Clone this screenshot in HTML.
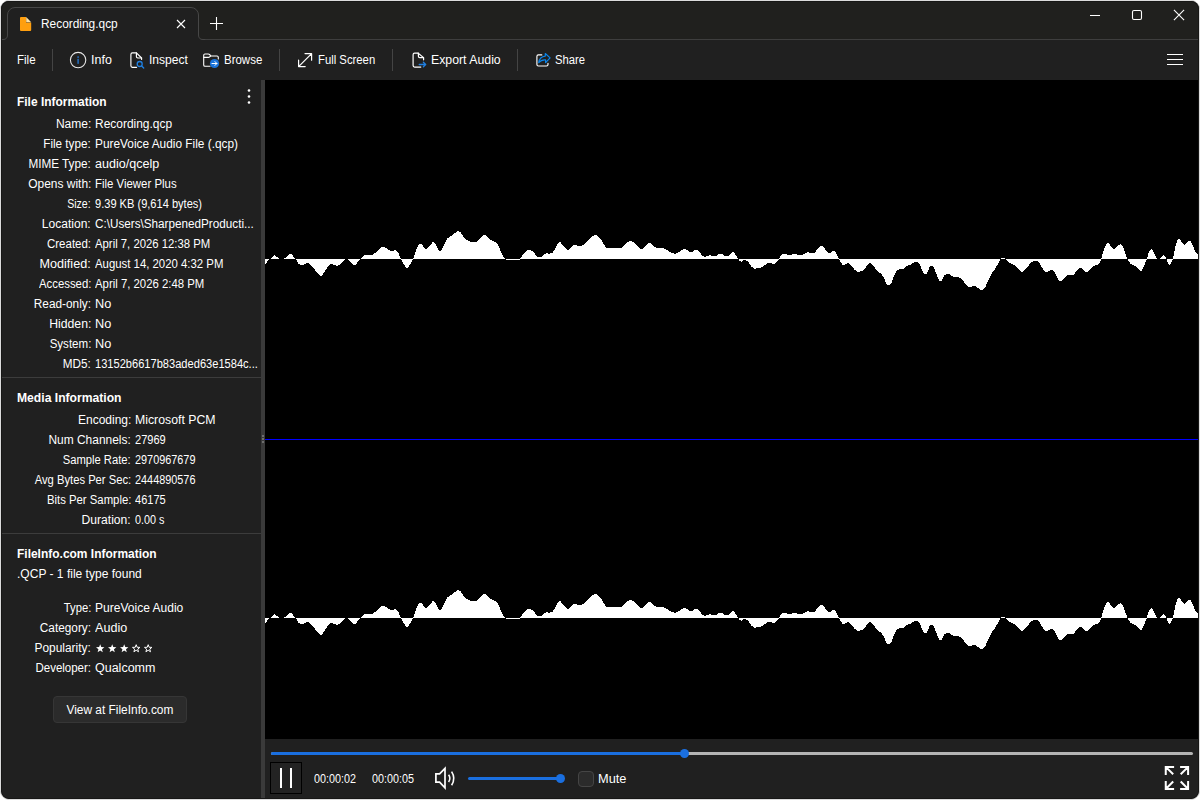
<!DOCTYPE html>
<html><head><meta charset="utf-8"><title>File Viewer Plus</title>
<style>
*{box-sizing:border-box;margin:0;padding:0}
html,body{width:1200px;height:800px;overflow:hidden;background:#fff}
body{font-family:"Liberation Sans",sans-serif;font-size:12px;color:#fff;position:relative}
#win{position:absolute;left:0;top:0;width:1200px;height:800px;background:#202020;border:1px solid #dcdcdc;border-radius:9px;overflow:hidden}
#edge{position:absolute;left:1px;top:1px;width:1198px;height:798px;border:1px solid #171716;border-radius:8px;pointer-events:none}
#in{position:absolute;left:-1px;top:-1px;width:1200px;height:800px}
.abs{position:absolute}
.t{position:absolute;white-space:nowrap;line-height:16px;height:16px}
.sep{position:absolute;width:1px;background:#444;top:49px;height:22px}
.hr{position:absolute;left:1px;width:260px;height:1px;background:#3c3c3c}
</style></head><body>
<div id="win"><div id="in">

<!-- title / tab strip -->
<div class="abs" style="left:0;top:0;width:1200px;height:39px;background:#20201e"></div>
<div class="abs" style="left:1px;top:39px;width:1198px;height:1px;background:#3e3e3e"></div>
<svg class="abs" style="left:0;top:0" width="210" height="41" viewBox="0 0 210 41">
  <path d="M1 39.5 H3 Q7.5 39.5 7.5 35 V15 A7.5 7.5 0 0 1 15 7.5 H191 A7.5 7.5 0 0 1 198.5 15 V35 Q198.5 39.5 203 39.5 H205 V41 H1 Z" fill="#202020" stroke="#474747" stroke-width="1"/>
  <rect x="0" y="40" width="210" height="1" fill="#202020"/>
  <path d="M21 17 H26 V22.4 H31.2 V30 Q31.2 31 30.2 31 H21 Q20 31 20 30 V18 Q20 17 21 17 Z" fill="#ff9f0f"/>
  <path d="M26.2 17.1 L31.2 22.2 H26.2 Z" fill="#ffe2a6"/>
  <path d="M177 20 L185 28 M185 20 L177 28" stroke="#fff" stroke-width="1.1" fill="none"/>
</svg>
<div class="t" style="top:16px;left:40.90px;transform-origin:0 50%;transform:scaleX(0.9913);">Recording.qcp</div>
<svg class="abs" style="left:208px;top:15px" width="16" height="16" viewBox="0 0 16 16"><path d="M8.5 2 V15 M2 8.5 H15" stroke="#fff" stroke-width="1.1" fill="none"/></svg>

<!-- caption buttons -->
<svg class="abs" style="left:1080px;top:4px" width="120" height="24" viewBox="0 0 120 24">
  <path d="M10 11.5 H20" stroke="#fff" stroke-width="1.1"/>
  <rect x="52.5" y="6.5" width="9" height="9" rx="1.5" fill="none" stroke="#fff" stroke-width="1.1"/>
  <path d="M93.9 5.9 L104.1 16.1 M104.1 5.9 L93.9 16.1" stroke="#fff" stroke-width="1.1"/>
</svg>

<!-- toolbar -->
<div class="t" style="top:52px;left:17.00px;transform-origin:0 50%;transform:scaleX(0.9616);">File</div>
<div class="sep" style="left:52px"></div>
<div class="t" style="top:52px;left:90.80px;transform-origin:0 50%;transform:scaleX(1.0400);">Info</div>
<div class="t" style="top:52px;left:148.65px;transform-origin:0 50%;transform:scaleX(1.0072);">Inspect</div>
<div class="t" style="top:52px;left:223.80px;transform-origin:0 50%;transform:scaleX(0.9571);">Browse</div>
<div class="sep" style="left:279px"></div>
<div class="t" style="top:52px;left:318.10px;transform-origin:0 50%;transform:scaleX(0.9425);">Full Screen</div>
<div class="sep" style="left:392px"></div>
<div class="t" style="top:52px;left:430.90px;transform-origin:0 50%;transform:scaleX(1.0245);">Export Audio</div>
<div class="sep" style="left:517px"></div>
<div class="t" style="top:52px;left:555.40px;transform-origin:0 50%;transform:scaleX(0.9370);">Share</div>
<svg class="abs" style="left:1166px;top:53px" width="18" height="14" viewBox="0 0 18 14"><path d="M1 1.5 H17 M1 6.5 H17 M1 11.5 H17" stroke="#fff" stroke-width="1"/></svg>
<svg class="abs" style="left:0;top:40px" width="600" height="40" viewBox="0 40 600 40" fill="none" stroke-linecap="round" stroke-linejoin="round">
  <!-- info -->
  <circle cx="78.1" cy="60.1" r="7.7" stroke="#e6e6e6" stroke-width="1.1"/>
  <rect x="77.35" y="56.3" width="1.5" height="1.6" fill="#2470c4"/><rect x="77.35" y="58.8" width="1.5" height="5" fill="#2470c4"/>
  <!-- inspect -->
  <g stroke="#fff" stroke-width="1.15">
    <path d="M136.4 52.9 H132.4 Q130.9 52.9 130.9 54.4 V65.8 Q130.9 67.3 132.4 67.3 H136.6"/>
    <path d="M136.4 52.9 L141.6 58 V59.4"/>
    <path d="M136.4 53.2 V56.6 Q136.4 58 137.8 58 H141.4"/>
  </g>
  <circle cx="139.7" cy="64" r="2.5" stroke="#1f7fe0" stroke-width="1.3"/><path d="M141.6 65.9 L143.7 68" stroke="#1f7fe0" stroke-width="1.4"/>
  <!-- browse -->
  <g stroke="#fff" stroke-width="1.1">
    <path d="M210 66.3 H205 Q203.7 66.3 203.7 65 V55.2 Q203.7 54 204.9 54 H208.3 Q209 54 209.5 54.5 L210.6 55.6 Q211 56 211.7 56 H217 Q218.3 56 218.3 57.3 V59"/>
    <path d="M203.9 57.4 H208.4 Q209.2 57.4 209.7 56.9 L210.6 56"/>
  </g>
  <circle cx="214.5" cy="63.5" r="4.6" fill="#1a73d9"/>
  <path d="M212 63.5 H216.8 M215 61.6 L216.9 63.5 L215 65.4" stroke="#fff" stroke-width="1"/>
  <!-- fullscreen -->
  <path d="M298.6 66.6 L311.6 53.6 M305 53.6 H311.6 V60.2 M298.6 60 V66.6 H305.2" stroke="#fff" stroke-width="1.2"/>
  <!-- export -->
  <g stroke="#fff" stroke-width="1.2">
    <path d="M418.2 53.2 H414.6 Q413.1 53.2 413.1 54.7 V65.6 Q413.1 67.1 414.6 67.1 H420.8"/>
    <path d="M418.2 53.2 L423.6 57.6 V59.8"/>
    <path d="M418.4 53.4 V56.2 Q418.4 57.6 419.8 57.6 H423.4"/>
  </g>
  <path d="M419.2 64.5 H425.6 M423.4 62.3 L425.7 64.5 L423.4 66.7" stroke="#1f7fe0" stroke-width="1.3"/>
  <!-- share -->
  <path d="M541.8 54.9 H538.4 Q536.9 54.9 536.9 56.4 V64.5 Q536.9 66 538.4 66 H546.5 Q548 66 548 64.5 V63.2" stroke="#fff" stroke-width="1.15"/>
  <path d="M545.3 53.5 L550.1 57.9 L545.6 62.6 V59.9 Q541.2 59.6 538.7 62.6 Q539.6 56.6 545.3 56.1 Z" stroke="#0a84e8" stroke-width="1.2"/>
</svg>

<!-- sidebar -->
<div class="t" style="top:94px;left:16.90px;transform-origin:0 50%;transform:scaleX(0.9948);font-weight:bold;">File Information</div>
<svg class="abs" style="left:246px;top:87.7px" width="6" height="17" viewBox="0 0 6 17"><circle cx="3" cy="2.5" r="1.3" fill="#fff"/><circle cx="3" cy="8.5" r="1.3" fill="#fff"/><circle cx="3" cy="14.5" r="1.3" fill="#fff"/></svg>
<div class="t" style="top:116px;right:1108.90px;transform-origin:100% 50%;transform:scaleX(1.0030);">Name:</div>
<div class="t" style="top:116px;left:95.00px;transform-origin:0 50%;transform:scaleX(0.9964);">Recording.qcp</div>
<div class="t" style="top:136px;right:1108.90px;transform-origin:100% 50%;transform:scaleX(0.9739);">File type:</div>
<div class="t" style="top:136px;left:95.00px;transform-origin:0 50%;transform:scaleX(0.9880);">PureVoice Audio File (.qcp)</div>
<div class="t" style="top:156px;right:1108.90px;transform-origin:100% 50%;transform:scaleX(0.9783);">MIME Type:</div>
<div class="t" style="top:156px;left:95.00px;transform-origin:0 50%;transform:scaleX(1.0460);">audio/qcelp</div>
<div class="t" style="top:176px;right:1108.90px;transform-origin:100% 50%;transform:scaleX(0.9962);">Opens with:</div>
<div class="t" style="top:176px;left:95.00px;transform-origin:0 50%;transform:scaleX(0.9509);">File Viewer Plus</div>
<div class="t" style="top:196px;right:1108.90px;transform-origin:100% 50%;transform:scaleX(0.8811);">Size:</div>
<div class="t" style="top:196px;left:95.00px;transform-origin:0 50%;transform:scaleX(0.9223);">9.39 KB (9,614 bytes)</div>
<div class="t" style="top:216px;right:1108.90px;transform-origin:100% 50%;transform:scaleX(1.0044);">Location:</div>
<div class="t" style="top:216px;left:95.00px;transform-origin:0 50%;transform:scaleX(0.9754);">C:\Users\SharpenedProducti...</div>
<div class="t" style="top:236px;right:1108.90px;transform-origin:100% 50%;transform:scaleX(0.9562);">Created:</div>
<div class="t" style="top:236px;left:95.00px;transform-origin:0 50%;transform:scaleX(0.9440);">April 7, 2026 12:38 PM</div>
<div class="t" style="top:256px;right:1108.90px;transform-origin:100% 50%;transform:scaleX(1.0516);">Modified:</div>
<div class="t" style="top:256px;left:95.00px;transform-origin:0 50%;transform:scaleX(0.9478);">August 14, 2020 4:32 PM</div>
<div class="t" style="top:276px;right:1108.90px;transform-origin:100% 50%;transform:scaleX(0.9450);">Accessed:</div>
<div class="t" style="top:276px;left:95.00px;transform-origin:0 50%;transform:scaleX(0.9466);">April 7, 2026 2:48 PM</div>
<div class="t" style="top:296px;right:1108.90px;transform-origin:100% 50%;transform:scaleX(0.9857);">Read-only:</div>
<div class="t" style="top:296px;left:95.00px;transform-origin:0 50%;transform:scaleX(1.0623);">No</div>
<div class="t" style="top:316px;right:1108.90px;transform-origin:100% 50%;transform:scaleX(1.0203);">Hidden:</div>
<div class="t" style="top:316px;left:95.00px;transform-origin:0 50%;transform:scaleX(1.0623);">No</div>
<div class="t" style="top:336px;right:1108.90px;transform-origin:100% 50%;transform:scaleX(0.9624);">System:</div>
<div class="t" style="top:336px;left:95.00px;transform-origin:0 50%;transform:scaleX(1.0623);">No</div>
<div class="t" style="top:356px;right:1108.90px;transform-origin:100% 50%;transform:scaleX(0.9766);">MD5:</div>
<div class="t" style="top:356px;left:95.00px;transform-origin:0 50%;transform:scaleX(0.9244);">13152b6617b83aded63e1584c...</div>
<div class="hr" style="top:377px"></div>
<div class="t" style="top:390px;left:16.90px;transform-origin:0 50%;transform:scaleX(1.0115);font-weight:bold;">Media Information</div>
<div class="t" style="top:412px;right:1068.90px;transform-origin:100% 50%;transform:scaleX(1.0008);">Encoding:</div>
<div class="t" style="top:412px;left:134.90px;transform-origin:0 50%;transform:scaleX(1.0245);">Microsoft PCM</div>
<div class="t" style="top:432px;right:1068.90px;transform-origin:100% 50%;transform:scaleX(0.9939);">Num Channels:</div>
<div class="t" style="top:432px;left:134.90px;transform-origin:0 50%;transform:scaleX(0.9203);">27969</div>
<div class="t" style="top:452px;right:1068.90px;transform-origin:100% 50%;transform:scaleX(0.9355);">Sample Rate:</div>
<div class="t" style="top:452px;left:134.90px;transform-origin:0 50%;transform:scaleX(0.9053);">2970967679</div>
<div class="t" style="top:472px;right:1068.90px;transform-origin:100% 50%;transform:scaleX(0.9349);">Avg Bytes Per Sec:</div>
<div class="t" style="top:472px;left:134.90px;transform-origin:0 50%;transform:scaleX(0.9053);">2444890576</div>
<div class="t" style="top:492px;right:1068.90px;transform-origin:100% 50%;transform:scaleX(0.9452);">Bits Per Sample:</div>
<div class="t" style="top:492px;left:134.90px;transform-origin:0 50%;transform:scaleX(0.9203);">46175</div>
<div class="t" style="top:512px;right:1068.90px;transform-origin:100% 50%;transform:scaleX(1.0085);">Duration:</div>
<div class="t" style="top:512px;left:134.90px;transform-origin:0 50%;transform:scaleX(0.9029);">0.00 s</div>
<div class="hr" style="top:533px"></div>
<div class="t" style="top:546px;left:16.90px;transform-origin:0 50%;transform:scaleX(0.9975);font-weight:bold;">FileInfo.com Information</div>
<div class="t" style="top:565.5px;left:16.90px;transform-origin:0 50%;transform:scaleX(1.0020);">.QCP - 1 file type found</div>
<div class="t" style="top:600px;right:1108.90px;transform-origin:100% 50%;transform:scaleX(0.9372);">Type:</div>
<div class="t" style="top:600px;left:95.00px;transform-origin:0 50%;transform:scaleX(1.0027);">PureVoice Audio</div>
<div class="t" style="top:620px;right:1108.90px;transform-origin:100% 50%;transform:scaleX(0.9843);">Category:</div>
<div class="t" style="top:620px;left:95.00px;transform-origin:0 50%;transform:scaleX(1.0493);">Audio</div>
<div class="t" style="top:640px;right:1108.90px;transform-origin:100% 50%;transform:scaleX(0.9914);">Popularity:</div>
<div class="t" style="top:660px;right:1108.90px;transform-origin:100% 50%;transform:scaleX(0.9581);">Developer:</div>
<div class="t" style="top:660px;left:95.00px;transform-origin:0 50%;transform:scaleX(1.0411);">Qualcomm</div>
<svg class="abs" style="left:90px;top:640px" width="70" height="16" viewBox="0 0 70 16"><polygon points="10.20,4.20 11.29,7.10 14.38,7.24 11.96,9.17 12.79,12.16 10.20,10.45 7.61,12.16 8.44,9.17 6.02,7.24 9.11,7.10" fill="#fff"/><polygon points="22.20,4.20 23.29,7.10 26.38,7.24 23.96,9.17 24.79,12.16 22.20,10.45 19.61,12.16 20.44,9.17 18.02,7.24 21.11,7.10" fill="#fff"/><polygon points="34.20,4.20 35.29,7.10 38.38,7.24 35.96,9.17 36.79,12.16 34.20,10.45 31.61,12.16 32.44,9.17 30.02,7.24 33.11,7.10" fill="#fff"/><polygon points="46.20,4.70 47.16,7.27 49.91,7.39 47.76,9.11 48.49,11.76 46.20,10.24 43.91,11.76 44.64,9.11 42.49,7.39 45.24,7.27" fill="none" stroke="#fff" stroke-width="1"/><polygon points="58.20,4.70 59.16,7.27 61.91,7.39 59.76,9.11 60.49,11.76 58.20,10.24 55.91,11.76 56.64,9.11 54.49,7.39 57.24,7.27" fill="none" stroke="#fff" stroke-width="1"/></svg>
<div class="abs" style="left:53px;top:696px;width:134px;height:27px;background:#2b2b2b;border:1px solid #363636;border-radius:4px"></div>
<div class="t" style="top:701.5px;left:65.60px;transform-origin:50% 50%;transform:scaleX(0.9917);">View at FileInfo.com</div>

<!-- splitter -->
<div class="abs" style="left:261px;top:80px;width:4px;height:720px;background:#3a3a3a"></div>
<div class="abs" style="left:262px;top:435px;width:2px;height:2px;background:#6e6e6e"></div>
<div class="abs" style="left:262px;top:438px;width:2px;height:2px;background:#6e6e6e"></div>
<div class="abs" style="left:262px;top:441px;width:2px;height:2px;background:#6e6e6e"></div>

<!-- waveform -->
<div class="abs" style="left:265px;top:80px;width:935px;height:659px;background:#000"></div>
<svg class="abs" style="left:0;top:0" width="1200" height="800" viewBox="0 0 1200 800" shape-rendering="crispEdges">
  <path d="M265 259L265 264.5L269.2 259L270 259L274 255L280 259L283.75 259L290 254L292 254.4L295 259L295.8 259L298.3 264L301.7 265L303.75 264.75L306.7 263L308.3 263L310.8 264.75L314.2 269L316.7 272.7L320 276L322 275.5L325 271L329.2 265L331.7 264L333.3 264.5L336.7 265.8L339.6 264.75L345 259L348 259L353.3 265L355.8 264.75L360 259L360.8 259L365 255L372.5 255L375.4 252.8L381.25 247L384.6 247L388.3 249.75L390.4 250.75L393.3 250.75L395 250L398.3 253L400.8 259L403.75 264L406 268L407.4 268L410.4 264.3L413.2 259L415.8 251L418.3 245.2L420 244L422 244.5L425.2 249L426.5 249L429.6 246L432.9 241.8L435.4 244L438.75 250.2L439.6 250.8L441 250.8L443 246.8L447 238.5L452.5 235L457.5 231L460 231.8L465 238.5L468.3 240.8L471.25 241.8L476.7 241.8L483.3 235L485.8 235L490.4 239.75L493.75 241.2L496.7 243L498.75 246L501.25 252.7L503.3 257L505.4 259L506 260L519.5 260L520 258.5L523.3 254.3L527.5 250.2L530.8 250.2L533.3 251.8L537 256.8L541.7 256.8L544.6 254.2L547.5 253.1L548.3 254L552 253.1L554.6 250.2L557.5 244L560 241.8L562.5 244.75L565 248L567.5 250L569.6 249L573.3 245L576.7 245L577.5 246L581.7 246L584.6 243.7L590 238.3L594.6 234.8L596.7 234.8L600.8 239.2L606.25 248L620.8 248L623 246.8L627.5 242L630 241L633.75 242L640.4 249L642.5 249L648.3 243L650.8 243L654.6 246.8L656.25 248L663.75 248L665 249L670 251.8L674.6 254L677.5 253L681.7 250L685 249L687.5 250.2L689.6 251.8L692.5 251.8L694.6 250L697.5 250L700.4 253L702 255.6L705 257L707.5 256L710 255L711.7 256L716.7 256L718.75 254.2L722.5 254.2L724.6 256L728 256L730 254.75L732.5 252L734.6 253L737.5 258L738.3 259L739.2 260.6L741.7 261.8L744.2 260L745.4 260L748.3 261.8L751.7 266.8L754.6 269L756.7 268L760 267.7L762.5 266.8L765 265L767.5 263L771.25 263L773 264L775 263.5L777.5 260.6L779.2 259L780.8 255.6L782.5 254.1L786.25 254.1L788 255L791.7 255L793 254.1L796.7 254.1L798 255L802.5 255L805.4 253.1L808.3 252.25L809.6 253.1L814.6 252.8L816.7 250L820.4 246L823 246L825 249.2L828.3 252.8L830.4 252.8L832.5 251L835 251L837 255.2L838.75 259L840.4 261.8L842.5 264.75L844.6 264.75L847.5 263L848.75 263L852 266.4L854.6 269.75L858 271.8L860 271.7L862.5 270.6L865 268.5L868 264L870.4 263L874.2 266.8L877.5 271.4L880.8 273.5L883.75 277.7L887 284.75L889.6 284.75L891.7 282.7L894.2 275.2L896.7 270.6L899.2 269.2L903 269L906.7 266L910.8 264.75L914.2 262L917.5 262L920 264.75L922 270.2L924.2 274L926.7 274L930 266.25L933 266.25L935.4 271.4L939.2 281L941.7 281L944.6 275.2L947 274L949.6 274.2L953 276.8L958.3 277L961.7 279L965 283.5L968.3 286.8L971.25 286.8L973 286L975.4 286L980.4 290L982.5 290L985 287.7L988.3 280.2L992.5 271.8L995 269L998 264L1000.4 259L1001 258L1005 258L1005.8 259L1009.2 262.7L1011.7 264L1015 265L1018.3 269L1021.7 272L1023.3 271.4L1026.7 268L1030.8 262.7L1033.75 261L1038 261L1040 264L1043 269L1045.4 271.8L1048 271.8L1050.4 270L1052.5 270L1054.6 272.25L1056.7 276.8L1059.2 281L1061.7 281L1065 277.5L1067.5 275L1073.75 275L1075.8 271.8L1079.2 268L1081.7 268L1085.4 271.8L1087.5 271.8L1093.3 266L1097.5 264.75L1099.6 262.7L1101.25 259L1103 252.7L1105 246.8L1107 243L1108.75 243L1111.7 247.25L1114.2 249.2L1118.3 245.2L1120.8 244L1123 246.8L1125 252.7L1127.5 259L1130.4 264L1135.8 266.4L1140.8 271L1142 270.6L1144.7 264.5L1146.8 259L1148.5 253L1150.8 249L1152 249L1154.3 253.8L1157 259L1160 259L1161.8 256.2L1163.6 255L1165.6 257L1166.6 259L1167.6 262.3L1169.5 265L1171.4 262.3L1173 259L1174.2 252.4L1175.9 244.6L1178 239.2L1180 239.2L1182 242.5L1184.6 245L1188.3 241.3L1190.7 241.3L1192.8 245.8L1195.3 251.6L1197.3 254L1198.7 252.8L1199 252.8L1199 259 Z" fill="#fff"/>
  <path d="M265 618L265 623.5L269.2 618L270 618L274 614L280 618L283.75 618L290 613L292 613.4L295 618L295.8 618L298.3 623L301.7 624L303.75 623.75L306.7 622L308.3 622L310.8 623.75L314.2 628L316.7 631.7L320 635L322 634.5L325 630L329.2 624L331.7 623L333.3 623.5L336.7 624.8L339.6 623.75L345 618L348 618L353.3 624L355.8 623.75L360 618L360.8 618L365 614L372.5 614L375.4 611.8L381.25 606L384.6 606L388.3 608.75L390.4 609.75L393.3 609.75L395 609L398.3 612L400.8 618L403.75 623L406 627L407.4 627L410.4 623.3L413.2 618L415.8 610L418.3 604.2L420 603L422 603.5L425.2 608L426.5 608L429.6 605L432.9 600.8L435.4 603L438.75 609.2L439.6 609.8L441 609.8L443 605.8L447 597.5L452.5 594L457.5 590L460 590.8L465 597.5L468.3 599.8L471.25 600.8L476.7 600.8L483.3 594L485.8 594L490.4 598.75L493.75 600.2L496.7 602L498.75 605L501.25 611.7L503.3 616L505.4 618L506 619L519.5 619L520 617.5L523.3 613.3L527.5 609.2L530.8 609.2L533.3 610.8L537 615.8L541.7 615.8L544.6 613.2L547.5 612.1L548.3 613L552 612.1L554.6 609.2L557.5 603L560 600.8L562.5 603.75L565 607L567.5 609L569.6 608L573.3 604L576.7 604L577.5 605L581.7 605L584.6 602.7L590 597.3L594.6 593.8L596.7 593.8L600.8 598.2L606.25 607L620.8 607L623 605.8L627.5 601L630 600L633.75 601L640.4 608L642.5 608L648.3 602L650.8 602L654.6 605.8L656.25 607L663.75 607L665 608L670 610.8L674.6 613L677.5 612L681.7 609L685 608L687.5 609.2L689.6 610.8L692.5 610.8L694.6 609L697.5 609L700.4 612L702 614.6L705 616L707.5 615L710 614L711.7 615L716.7 615L718.75 613.2L722.5 613.2L724.6 615L728 615L730 613.75L732.5 611L734.6 612L737.5 617L738.3 618L739.2 619.6L741.7 620.8L744.2 619L745.4 619L748.3 620.8L751.7 625.8L754.6 628L756.7 627L760 626.7L762.5 625.8L765 624L767.5 622L771.25 622L773 623L775 622.5L777.5 619.6L779.2 618L780.8 614.6L782.5 613.1L786.25 613.1L788 614L791.7 614L793 613.1L796.7 613.1L798 614L802.5 614L805.4 612.1L808.3 611.25L809.6 612.1L814.6 611.8L816.7 609L820.4 605L823 605L825 608.2L828.3 611.8L830.4 611.8L832.5 610L835 610L837 614.2L838.75 618L840.4 620.8L842.5 623.75L844.6 623.75L847.5 622L848.75 622L852 625.4L854.6 628.75L858 630.8L860 630.7L862.5 629.6L865 627.5L868 623L870.4 622L874.2 625.8L877.5 630.4L880.8 632.5L883.75 636.7L887 643.75L889.6 643.75L891.7 641.7L894.2 634.2L896.7 629.6L899.2 628.2L903 628L906.7 625L910.8 623.75L914.2 621L917.5 621L920 623.75L922 629.2L924.2 633L926.7 633L930 625.25L933 625.25L935.4 630.4L939.2 640L941.7 640L944.6 634.2L947 633L949.6 633.2L953 635.8L958.3 636L961.7 638L965 642.5L968.3 645.8L971.25 645.8L973 645L975.4 645L980.4 649L982.5 649L985 646.7L988.3 639.2L992.5 630.8L995 628L998 623L1000.4 618L1001 617L1005 617L1005.8 618L1009.2 621.7L1011.7 623L1015 624L1018.3 628L1021.7 631L1023.3 630.4L1026.7 627L1030.8 621.7L1033.75 620L1038 620L1040 623L1043 628L1045.4 630.8L1048 630.8L1050.4 629L1052.5 629L1054.6 631.25L1056.7 635.8L1059.2 640L1061.7 640L1065 636.5L1067.5 634L1073.75 634L1075.8 630.8L1079.2 627L1081.7 627L1085.4 630.8L1087.5 630.8L1093.3 625L1097.5 623.75L1099.6 621.7L1101.25 618L1103 611.7L1105 605.8L1107 602L1108.75 602L1111.7 606.25L1114.2 608.2L1118.3 604.2L1120.8 603L1123 605.8L1125 611.7L1127.5 618L1130.4 623L1135.8 625.4L1140.8 630L1142 629.6L1144.7 623.5L1146.8 618L1148.5 612L1150.8 608L1152 608L1154.3 612.8L1157 618L1160 618L1161.8 615.2L1163.6 614L1165.6 616L1166.6 618L1167.6 621.3L1169.5 624L1171.4 621.3L1173 618L1174.2 611.4L1175.9 603.6L1178 598.2L1180 598.2L1182 601.5L1184.6 604L1188.3 600.3L1190.7 600.3L1192.8 604.8L1195.3 610.6L1197.3 613L1198.7 611.8L1199 611.8L1199 618 Z" fill="#fff"/>
  <rect x="265" y="439" width="935" height="1" fill="#0000ff"/>
</svg>

<!-- player -->
<div class="abs" style="left:271px;top:752px;width:922px;height:3px;background:#b4b4b4;border-radius:2px"></div>
<div class="abs" style="left:271px;top:752px;width:414px;height:3px;background:#1a6fe0;border-radius:2px"></div>
<div class="abs" style="left:680px;top:749px;width:9px;height:9px;background:#1a6fe0;border-radius:50%"></div>
<div class="abs" style="left:270px;top:762px;width:32px;height:32px;border:1px solid #000;background:#232323"></div>
<div class="abs" style="left:280px;top:768px;width:2px;height:20px;background:#fff"></div>
<div class="abs" style="left:290px;top:768px;width:2px;height:20px;background:#fff"></div>
<div class="t" style="top:771px;left:313.70px;transform-origin:0 50%;transform:scaleX(0.8996);">00:00:02</div>
<div class="t" style="top:771px;left:371.70px;transform-origin:0 50%;transform:scaleX(0.8996);">00:00:05</div>
<svg class="abs" style="left:434px;top:766px" width="24" height="25" viewBox="0 -1 24 25"><path d="M1.9 6.9 H5.6 L11 1.4 V20.8 L5.6 15.2 H1.9 Z" fill="none" stroke="#fff" stroke-width="1.7" stroke-linejoin="miter"/><path d="M14.6 7.8 Q17.2 11.4 14.6 15 M17.6 4.6 Q22 11.4 17.6 18.2" fill="none" stroke="#fff" stroke-width="1.6"/></svg>
<div class="abs" style="left:468px;top:777px;width:94px;height:3px;background:#1a6fe0;border-radius:2px"></div>
<div class="abs" style="left:556px;top:774px;width:9px;height:9px;background:#1a6fe0;border-radius:50%"></div>
<div class="abs" style="left:578px;top:771px;width:16px;height:16px;background:#2b2b2b;border:1px solid #454545;border-radius:4px"></div>
<div class="t" style="top:771px;left:597.70px;transform-origin:0 50%;transform:scaleX(1.0648);">Mute</div>
<svg class="abs" style="left:1164px;top:765px" width="26" height="26" viewBox="0 0 26 26"><path d="M1.75 9.9 V1.9 H10.1 M2 2.1 L9.2 9.3 M16.1 1.9 H24.1 V9.9 M23.9 2.1 L16.7 9.3 M1.75 16.1 V23.9 H10.1 M2 23.7 L9.2 16.5 M24.1 16.1 V23.9 H16.1 M23.9 23.7 L16.7 16.5" fill="none" stroke="#fff" stroke-width="2" stroke-linecap="butt" stroke-linejoin="miter"/></svg>

<div id="edge"></div>
</div></div>
</body></html>
